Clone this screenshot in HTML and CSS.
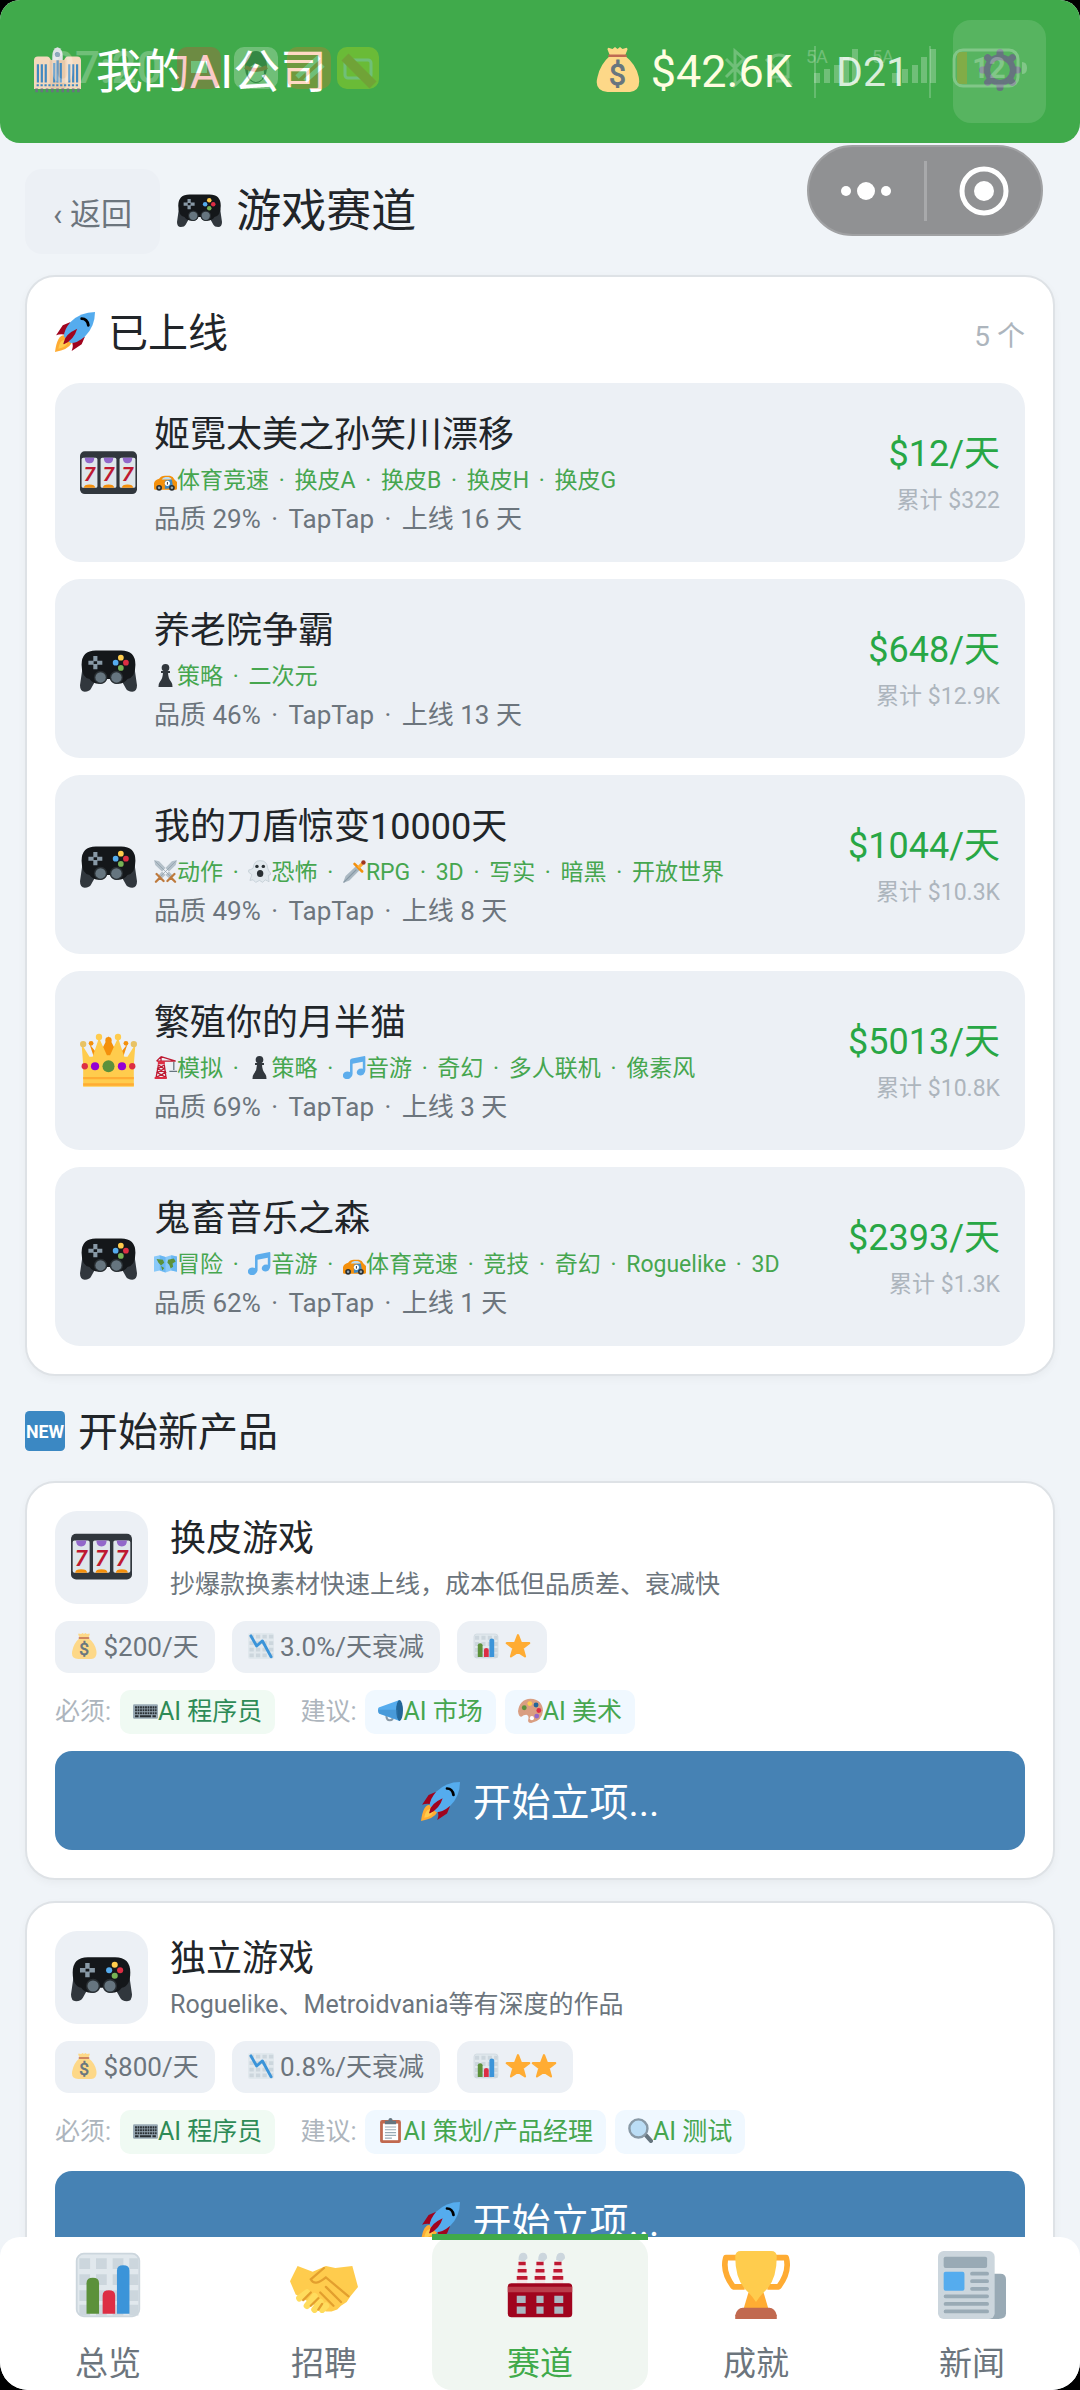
FILE: index.html
```html
<!DOCTYPE html>
<html lang="zh-CN">
<head>
  <meta charset="UTF-8">
  <meta name="viewport" content="width=device-width, initial-scale=1.0">
  <title>我的AI公司</title>
  <link rel="stylesheet" href="styles.css">
</head>
<body>

  <!-- icons -->
  <svg class="sprite" aria-hidden="true">
    <symbol id="i-office" viewBox="0 0 36 36">
      <path fill="#dfe3e6" d="M14 8q0-6 4-7q4 1 4 7v5h-8z"/>
      <path fill="#f4d9bd" d="M0 11q0-3 3-3h7q2 0 3 3h10q1-3 3-3h7q3 0 3 3v22H0z"/>
      <path fill="#e8c9aa" d="M12 11h12v22H12z"/>
      <path stroke="#4289c1" stroke-width="1.7" d="M3 14v14M6 14v14M9 14v14M27 14v14M30 14v14M33 14v14M15.500 13v15M18 11v17M20.500 13v15"/>
      <path stroke="#4289c1" stroke-width="1.5" stroke-dasharray="1.700 1.300" d="M2 30h33"/>
      <path stroke="#66757f" stroke-width="3" stroke-dasharray="2 2" d="M1 34h34"/>
      <circle cx="18" cy="6.500" r="2" fill="#6b8da6"/>
    </symbol>
    <symbol id="i-money" viewBox="0 0 36 36">
      <path fill="#fdd888" d="M12 7L10 2q0-2 2-1l2 .5L16 0l2 1.500L20 0l2 1.500 2-.5q2-1 2 1l-2 5q9 7 11 17 2 11-7 12H10Q-1 35 2 24 4 14 12 7z"/>
      <path fill="none" stroke="#bf6952" stroke-width="2" stroke-linecap="round" d="M11.500 7h13"/>
      <text x="18" y="30" text-anchor="middle" font-size="24" fill="#67757f" stroke="#67757f" stroke-width=".8">$</text>
    </symbol>
    <symbol id="i-gear" viewBox="0 0 36 36">
      <g fill="none" stroke="#66757f">
        <circle cx="18" cy="18" r="11" stroke-width="5"/>
        <path stroke-width="6" stroke-linecap="round" d="M18 3v3M18 30v3M3 18h3M30 18h3M7.400 7.400l2 2M26.600 26.600l2 2M7.400 28.600l2-2M26.600 9.400l2-2"/>
      </g>
    </symbol>
    <symbol id="i-gamepad" viewBox="0 0 36 36">
      <path fill="#31373d" d="M2 14L0 28q0 4 3 4 3 0 4-2l5-9h12l5 9q1 2 4 2 3 0 3-4l-2-14z"/>
      <path fill="#14171a" d="M10 6h16q9 0 9 9 0 8-5 9-2 3-6 3-4 0-5-3h-2q-1 3-5 3-4 0-6-3-5-1-5-9 0-9 9-9z"/>
      <circle cx="13" cy="23" r="4.200" fill="#292f33"/><circle cx="23" cy="23" r="4.200" fill="#292f33"/>
      <circle cx="13" cy="23" r="3.300" fill="#66757f"/><circle cx="23" cy="23" r="3.300" fill="#66757f"/>
      <path stroke="#8899a6" stroke-width="2.600" d="M9.700 9.500v3.300M9.700 14.500v3.300M5.300 13.700h3.300M10.800 13.700h3.300"/>
      <circle cx="25.800" cy="10.500" r="1.800" fill="#ffcc4d"/><circle cx="22.500" cy="13.700" r="1.800" fill="#55acee"/>
      <circle cx="29" cy="13.700" r="1.800" fill="#dd2e44"/><circle cx="25.800" cy="17" r="1.800" fill="#77b255"/>
    </symbol>
    <symbol id="i-slot" viewBox="0 0 36 36">
      <rect y="4" width="36" height="27" rx="3" fill="#31373d"/>
      <path fill="#dfe6eb" d="M1 9q0-1 1-1h8q1 0 1 1v17q0 1-1 1H2q-1 0-1-1zM13 9q0-1 1-1h8q1 0 1 1v17q0 1-1 1h-8q-1 0-1-1zM25 9q0-1 1-1h8q1 0 1 1v17q0 1-1 1h-8q-1 0-1-1z"/>
      <path fill="#9268ca" d="M3 8h6q0 3.500-3 3.500T3 8zM15 8h6q0 3.500-3 3.500T15 8zM27 8h6q0 3.500-3 3.500T27 8z"/>
      <path fill="#f4900c" d="M2.500 27q0-2 3.500-2t3.500 2zM14.500 27q0-2 3.500-2t3.500 2zM26.500 27q0-2 3.500-2t3.500 2z"/>
      <g font-size="13" font-weight="700" font-style="italic" fill="#be1931" text-anchor="middle">
        <text x="6" y="23">7</text><text x="18" y="23">7</text><text x="30" y="23">7</text>
      </g>
    </symbol>
    <symbol id="i-crown" viewBox="0 0 36 36">
      <path fill="#f4900c" d="M6 7l3 9h18l3-9-4 5-4-2-4-8-4 8-4 2z"/>
      <circle cx="7" cy="6.500" r="1.500" fill="#f4900c"/><circle cx="18" cy="4.500" r="2" fill="#f4900c"/><circle cx="29" cy="6.500" r="1.500" fill="#f4900c"/>
      <path fill="#ffcc4d" d="M2 34L2 20 1 7l5 8h2l4-12 5 11h2l5-11 4 12h2l5-8-1 13v14z"/>
      <circle cx="2" cy="7" r="2" fill="#e8c264"/><circle cx="12" cy="2.500" r="2" fill="#ffcc4d"/><circle cx="24" cy="2.500" r="2" fill="#ffcc4d"/><circle cx="34" cy="7" r="2" fill="#e8c264"/>
      <path stroke="#ffac33" stroke-width="1.500" d="M2 28.500h32M2 32.500h32"/>
      <circle cx="18" cy="21" r="3.800" fill="#5c913b"/>
      <circle cx="9.500" cy="21" r="2.600" fill="#9400d3"/><circle cx="26.500" cy="21" r="2.600" fill="#9400d3"/>
      <circle cx="3" cy="21" r="2" fill="#dd2e44"/><circle cx="33" cy="21" r="2" fill="#dd2e44"/>
    </symbol>
    <symbol id="i-rocket" viewBox="0 0 36 36">
      <path fill="#a0041e" d="M14 9L7 12 1 21q5-2 9 0zM27 22l-3 7-9 6q2-5 0-9z"/>
      <path fill="#ffac33" d="M8 21q-6 0-8 15 12-2 15-8z"/>
      <path fill="#ffcc4d" d="M8 25q-4 1-5 8 7-1 8-5z"/>
      <path fill="#55acee" d="M36 0Q23 0 14 9 8 16 8 22l6 6q6 0 13-6Q36 13 36 0z"/>
      <path fill="#a0041e" d="M8 27Q9 20 20 15q-3 10-12 14-1 0 0-2z"/>
      <path fill="none" stroke="#000" stroke-width="2.500" stroke-linecap="round" d="M24 6q5 0 6 6"/>
    </symbol>
    <symbol id="i-car" viewBox="0 0 36 36">
      <path fill="#f4900c" d="M8 17q3-5 9-5h8q5 1 7 6l4 4v10q0 2-2 2H2q-2 0-2-2v-8q1-5 8-7z"/>
      <path fill="#bbddf5" d="M12 18q2-4 6-4h5q4 1 5 4z"/>
      <path fill="#4289c1" d="M17 20l11-2 2 13-13 2z"/>
      <circle cx="8" cy="31" r="4.500" fill="#292f33"/><circle cx="28" cy="31" r="4.500" fill="#292f33"/>
      <circle cx="8" cy="31" r="2" fill="#99aab5"/><circle cx="28" cy="31" r="2" fill="#99aab5"/>
      <circle cx="21" cy="24" r="4" fill="#fff"/><path stroke="#292f33" stroke-width="1.500" d="M21 22v4"/>
    </symbol>
    <symbol id="i-pawn" viewBox="0 0 36 36">
      <circle cx="18" cy="6" r="6" fill="#31373d"/>
      <path fill="#31373d" d="M11 11h14v3h-3q0 8 5 14 2 2 2 8H7q0-6 2-8 5-6 5-14h-3z"/>
    </symbol>
    <symbol id="i-swords" viewBox="0 0 36 36">
      <path fill="#b4c0c9" d="M0 0l8 2 22 23-5 5L2 8zM36 0l-8 2L6 25l5 5L34 8z"/>
      <path stroke="#8899a6" d="M2 2l25 25M34 2L9 27"/>
      <path fill="none" stroke="#be7a3d" stroke-width="3.500" stroke-linecap="round" d="M4 22l11 11M32 22L21 33M9 28l-6 6M27 28l6 6"/>
    </symbol>
    <symbol id="i-ghost" viewBox="0 0 36 36">
      <path fill="#e1e8ed" stroke="#b8c4cd" d="M8 13Q9 1 19 1q11 0 12 12l2 5q4 2 2 5l-3 1 1 10-6-3-4 4-5-3-6 3-4-4-5 1 3-9-5-4q-1-5 3-4z"/>
      <circle cx="14" cy="10" r="2.700" fill="#292f33"/><circle cx="24" cy="10" r="2.700" fill="#292f33"/>
      <ellipse cx="19" cy="21" rx="5" ry="5.500" fill="#292f33"/>
    </symbol>
    <symbol id="i-dagger" viewBox="0 0 36 36">
      <path fill="#aab8c2" d="M0 36L4 25 21 9l6 6L10 32z"/>
      <path stroke="#8899a6" stroke-width="2" d="M1 35l20-20"/>
      <path stroke="#f4900c" stroke-width="4" stroke-linecap="round" d="M18 6l12 12"/>
      <path stroke="#ffac33" stroke-width="5" d="M24 12l6-6"/>
      <circle cx="32" cy="4" r="3.500" fill="#a0341e"/>
    </symbol>
    <symbol id="i-crane" viewBox="0 0 36 36">
      <path fill="none" stroke="#be1931" stroke-width="2" d="M4 8h30M11 1L4 8M11 1l23 7M11 1v7M7 13L3 35M16 13l3 22M7 14l9 6-11 6 13 7M16 14l-10 6 12 6-14 7"/>
      <path fill="#dd2e44" d="M6 8h11v5H6zM1 33h19v3H1z"/>
      <path stroke="#66757f" stroke-width="2" d="M31 9v13M24 24h12"/>
    </symbol>
    <symbol id="i-music" viewBox="0 0 36 36">
      <path fill="#5dadec" d="M34 0L14 4q-3 .5-3 3v18q-5-2-9 1-4 4-1 8 4 4 10 1 4-3 4-7V12l16-3v11q-5-1-8 2-3 4 0 7 4 3 9 0 3-3 3-7V2q0-2-1-2z"/>
    </symbol>
    <symbol id="i-map" viewBox="0 0 36 36">
      <path fill="#88c9f9" d="M0 7l9-2 9 3 9-3 9 2v24l-9-2-9 3-9-3-9 2z"/>
      <path fill="#55acee" d="M9 5l9 3v24l-9-3zM27 5l9 2v24l-9-2z" opacity=".6"/>
      <path fill="#5c913b" d="M4 11l10 1 2 5-5 4-4-4zM11 22l5 3-3 4zM22 12l9-2 3 5-5 3 1 5-4 3-2-6-3-3z"/>
    </symbol>
    <symbol id="i-new" viewBox="0 0 36 36">
      <rect width="36" height="36" rx="4" fill="#3b88c3"/>
      <text x="18" y="24" text-anchor="middle" font-size="16" font-weight="700" fill="#fff">NEW</text>
    </symbol>
    <symbol id="i-down" viewBox="0 0 36 36">
      <rect width="36" height="36" rx="3" fill="#e1e8ed"/>
      <path stroke="#ccd6dd" stroke-width="5" stroke-dasharray="6 3" d="M2 5h34M2 14h34M2 23h34M2 31h34"/>
      <path fill="none" stroke="#3b94d9" stroke-width="4" stroke-linecap="round" stroke-linejoin="round" d="M4 4l8 14 8-7 12 22"/>
    </symbol>
    <symbol id="i-chart" viewBox="-1 -1 38 38">
      <rect x=".5" y=".5" width="35" height="35" rx="4" fill="#e1e8ed" stroke="#ccd6dd"/>
      <path stroke="#ccd6dd" stroke-width="6" stroke-dasharray="6 3.300" d="M2 6h33M2 15h33M2 24h33M2 32h33"/>
      <path fill="#5c913b" d="M6 34V17q0-3 3.500-3t3.500 3v17z"/>
      <path fill="#dd2e44" d="M15 34V24q0-3 3.500-3t3.500 3v10z"/>
      <path fill="#3b94d9" d="M23 34V10q0-3 3.500-3t3.500 3v24z"/>
    </symbol>
    <symbol id="i-star" viewBox="0 0 36 36">
      <path fill="#ffac33" stroke="#ffac33" stroke-width="3" stroke-linejoin="round" d="M18 3l4 10.500 11.500.5-9 7 3.200 11.500L18 26l-9.700 6.500L11.500 21l-9-7 11.500-.5z"/>
    </symbol>
    <symbol id="i-keyboard" viewBox="0 0 36 36">
      <rect y="9" width="36" height="21" rx="2" fill="#99aab5"/>
      <path stroke="#292f33" stroke-width="3" stroke-dasharray="2.600 1" d="M3 13.500h31M3 17.700h31M3 22h31"/>
      <path stroke="#292f33" stroke-width="3" d="M3 26.300h5M10 26.300h16M28 26.300h5"/>
    </symbol>
    <symbol id="i-horn" viewBox="0 0 36 36">
      <path fill="none" stroke="#8899a6" stroke-width="3" d="M12 24q0 8 5 8t5-6"/>
      <path fill="#55acee" d="M0 17Q0 13 3 13L31 3v30L3 23q-3 0-3-6z"/>
      <ellipse cx="31" cy="18" rx="5" ry="15" fill="#226699"/>
      <path fill="#3b88c3" d="M0 17h28v14L3 23q-3-1-3-6z" opacity=".5"/>
    </symbol>
    <symbol id="i-palette" viewBox="0 0 36 36">
      <path fill="#d99e82" d="M18 1q17 1 18 17-1 15-17 18-6 0-4-6 1-5-3-6-4 0-7 3-4 0-5-8Q2 2 18 1z"/>
      <circle cx="9" cy="14" r="3.500" fill="#5c913b"/><circle cx="17" cy="8" r="3.500" fill="#ffcc4d"/>
      <circle cx="26" cy="10" r="3.500" fill="#226699"/><circle cx="30" cy="18" r="3.500" fill="#dd2e44"/>
      <circle cx="27" cy="26" r="3.500" fill="#9268ca"/><circle cx="20" cy="29" r="3" fill="#fff"/>
    </symbol>
    <symbol id="i-clipboard" viewBox="0 0 36 36">
      <rect x="3" y="3" width="30" height="33" rx="3" fill="#c1694f"/>
      <path fill="#fff" d="M7 8h22v24H7z"/>
      <path fill="#66757f" d="M10 4h5q0-4 3-4t3 4h5v5H10z"/>
      <path stroke="#99aab5" stroke-width="1.600" d="M10 13h16M10 17h16M10 21h16M10 25h16M10 29h10"/>
    </symbol>
    <symbol id="i-search" viewBox="0 0 36 36">
      <path stroke="#66757f" stroke-width="6" stroke-linecap="round" d="M26 25l7 8"/>
      <circle cx="15" cy="15" r="13" fill="#bbddf5" stroke="#8899a6" stroke-width="3.500"/>
    </symbol>
    <symbol id="i-hands" viewBox="0 0 36 36">
      <path fill="#ffcc4d" d="M4 8l8 3 7-3 5 1 9-1 3 11-4 5-2 3-3 2-2 2-3 1-3 0-9-5-7-4-3-7z"/>
      <path fill="none" stroke="#ffdc5d" stroke-width="3.500" stroke-linecap="round" d="M9 22l-4 3M13 24l-4 5M16 27l-3 4M19 29l-2 2"/>
      <path fill="none" stroke="#e39f2e" stroke-width="1.200" stroke-linecap="round" d="M18 9l-7 6q2 4 8-1l12 10M19 19l8 8M16 22l7 7M7 26l4-4M11 29l4-4M15 31l2-3"/>
    </symbol>
    <symbol id="i-factory" viewBox="-1 0 38 36">
      <path fill="#ccd6dd" d="M6 4q0-4 2.500-4T11 3l-2 2zM17 4q0-4 2.500-4T22 3l-2 2zM27 4q0-4 2.500-4T32 3l-2 2z"/>
      <path fill="#f5e4e6" d="M6 5h4l1 13H5zM16 5h4l1 13h-6zM26 5h4l1 13h-6z"/>
      <path stroke="#be1931" stroke-width="2" d="M6 6h4M5.500 10h5M5 14h6M16 6h4M15.500 10h5M15 14h6M26 6h4M25.500 10h5M25 14h6"/>
      <rect y="17" width="36" height="19" rx="2" fill="#a0041e"/>
      <path fill="#bb3c4b" d="M0 19h36v3H0z"/>
      <path fill="#aab8c2" d="M5 24h5v4H5zM16 24h4v4h-4zM26 24h5v4h-5zM5 30h5v4H5zM16 30h4v4h-4zM26 30h5v4h-5z"/>
    </symbol>
    <symbol id="i-cup" viewBox="0 0 36 36">
      <path fill="none" stroke="#ffac33" stroke-width="3" stroke-linejoin="round" d="M9 3.500H2Q0 11 6 19h6M27 3.500h7q2 7.500-4 15.500h-6"/>
      <path fill="#ffac33" d="M14 22h8l3 10H11z"/>
      <path fill="#ffcc4d" d="M7 3q0-3 3-3h16q3 0 3 3 0 13-7 19-2 2-4 5-2-3-4-5Q7 16 7 3z"/>
      <path fill="#c1694f" d="M7 36v-2q1-4 4-4h14q3 0 4 4v2z"/>
    </symbol>
    <symbol id="i-news" viewBox="0 0 36 36">
      <path fill="#99aab5" d="M24 12h9q3 0 3 3v18q0 3-4 3h-8z"/>
      <rect width="30" height="36" rx="3" fill="#ccd6dd"/>
      <rect x="3" y="3" width="23" height="6" rx="1" fill="#99aab5"/>
      <rect x="3" y="11" width="11" height="10" rx="1" fill="#55acee"/>
      <path stroke="#99aab5" stroke-width="2" stroke-linecap="round" d="M18 12h8M18 16h8M18 20h8M4 24h22M4 28h22M4 32h22"/>
    </symbol>
  </svg>

  <div class="app">

    <header class="topbar">
      <h1 class="company"><svg class="emoji"><use href="#i-office"/></svg> 我的AI公司</h1>
      <div class="cash"><svg class="emoji"><use href="#i-money"/></svg> $42.6K</div>
      <div class="day">D21</div>
      <button class="settings" aria-label="设置"><svg class="emoji"><use href="#i-gear"/></svg></button>

      <!-- faint system status bar on top of the header -->
      <div class="status" aria-hidden="true">
        <span class="clock">07:20</span>
        <svg class="notices" viewBox="0 0 204 42">
          <rect width="44" height="42" rx="10" fill="#f2302c"/>
          <path fill="#fff" d="M14 14h16v12H14z"/>
          <rect x="57" width="44" height="42" rx="10" fill="#fff"/>
          <ellipse cx="79" cy="20" rx="11" ry="16" fill="#123"/>
          <ellipse cx="79" cy="26" rx="8" ry="9" fill="#fff"/>
          <path stroke="#e02020" stroke-width="4" d="M68 20q11 6 22 0" fill="none"/>
          <rect x="110" width="44" height="42" rx="10" fill="#ff6a1a"/>
          <path stroke="#fff" stroke-width="5" d="M120 30l22-20M128 34l18-16"/>
          <rect x="160" width="42" height="42" rx="10" fill="#e6f000"/>
          <rect x="168" y="13" width="26" height="18" rx="3" fill="none" stroke="#fff" stroke-width="3"/>
          <path stroke="#ff9000" stroke-width="10" d="M168 10l28 28"/>
        </svg>
        <svg class="radio" viewBox="0 0 218 42" fill="#fff">
          <path fill="none" stroke="#fff" stroke-width="3" d="M2 12l18 18-9 8V4l9 8L2 30M42 12l26 26M46 30V18q0-10 9-10t9 10v12zM52 34h7"/>
          <text x="82" y="16" font-size="18">5A</text>
          <path d="M90 26h6v10h-6zM100 22h6v14h-6zM110 18h6v18h-6zM119 10h6v26h-6zM128 2h6v34h-6z"/>
          <text x="148" y="16" font-size="18">5A</text>
          <path d="M168 26h6v10h-6zM178 22h6v14h-6zM188 18h6v18h-6zM197 10h6v26h-6zM206 2h6v34h-6z"/>
        </svg>
        <svg class="battery" viewBox="0 0 76 40">
          <rect x="2" y="2" width="64" height="36" rx="9" fill="none" stroke="#fff" stroke-width="3"/>
          <path fill="#ff9500" d="M5 8q0-4 4-4h6v32H9q-4 0-4-4z"/>
          <path fill="#fff" d="M70 14q5 0 5 6t-5 6z"/>
          <text x="37" y="30" text-anchor="middle" font-size="29" font-weight="700" fill="#fff">12</text>
        </svg>
      </div>
    </header>

    <div class="capsule">
      <button aria-label="更多">
        <svg viewBox="0 0 50 18"><circle cx="5" cy="9" r="5"/><circle cx="25" cy="9" r="9"/><circle cx="45" cy="9" r="5"/></svg>
      </button>
      <button aria-label="关闭">
        <svg viewBox="0 0 50 50"><circle cx="25" cy="25" r="22" fill="none" stroke="#fff" stroke-width="5"/><circle cx="25" cy="25" r="10"/></svg>
      </button>
    </div>

    <main>
      <div class="page-head">
        <button class="back">‹ 返回</button>
        <h2><svg class="emoji"><use href="#i-gamepad"/></svg> 游戏赛道</h2>
      </div>

      <section class="card">
        <div class="card-head">
          <h3><svg class="emoji"><use href="#i-rocket"/></svg> 已上线</h3>
          <span class="count">5 个</span>
        </div>

        <div class="product">
          <svg class="emoji"><use href="#i-slot"/></svg>
          <div class="info">
            <h4>姬霓太美之孙笑川漂移</h4>
            <p class="tags"><svg class="emoji"><use href="#i-car"/></svg>体育竞速 <i>·</i> 换皮A <i>·</i> 换皮B <i>·</i> 换皮H <i>·</i> 换皮G</p>
            <p class="meta">品质 29% <i>·</i> TapTap <i>·</i> 上线 16 天</p>
          </div>
          <div class="income">
            <strong>$12/天</strong>
            <span>累计 $322</span>
          </div>
        </div>

        <div class="product">
          <svg class="emoji"><use href="#i-gamepad"/></svg>
          <div class="info">
            <h4>养老院争霸</h4>
            <p class="tags"><svg class="emoji"><use href="#i-pawn"/></svg>策略 <i>·</i> 二次元</p>
            <p class="meta">品质 46% <i>·</i> TapTap <i>·</i> 上线 13 天</p>
          </div>
          <div class="income">
            <strong>$648/天</strong>
            <span>累计 $12.9K</span>
          </div>
        </div>

        <div class="product">
          <svg class="emoji"><use href="#i-gamepad"/></svg>
          <div class="info">
            <h4>我的刀盾惊变10000天</h4>
            <p class="tags"><svg class="emoji"><use href="#i-swords"/></svg>动作 <i>·</i> <svg class="emoji"><use href="#i-ghost"/></svg>恐怖 <i>·</i> <svg class="emoji"><use href="#i-dagger"/></svg>RPG <i>·</i> 3D <i>·</i> 写实 <i>·</i> 暗黑 <i>·</i> 开放世界</p>
            <p class="meta">品质 49% <i>·</i> TapTap <i>·</i> 上线 8 天</p>
          </div>
          <div class="income">
            <strong>$1044/天</strong>
            <span>累计 $10.3K</span>
          </div>
        </div>

        <div class="product">
          <svg class="emoji"><use href="#i-crown"/></svg>
          <div class="info">
            <h4>繁殖你的月半猫</h4>
            <p class="tags"><svg class="emoji"><use href="#i-crane"/></svg>模拟 <i>·</i> <svg class="emoji"><use href="#i-pawn"/></svg>策略 <i>·</i> <svg class="emoji"><use href="#i-music"/></svg>音游 <i>·</i> 奇幻 <i>·</i> 多人联机 <i>·</i> 像素风</p>
            <p class="meta">品质 69% <i>·</i> TapTap <i>·</i> 上线 3 天</p>
          </div>
          <div class="income">
            <strong>$5013/天</strong>
            <span>累计 $10.8K</span>
          </div>
        </div>

        <div class="product">
          <svg class="emoji"><use href="#i-gamepad"/></svg>
          <div class="info">
            <h4>鬼畜音乐之森</h4>
            <p class="tags"><svg class="emoji"><use href="#i-map"/></svg>冒险 <i>·</i> <svg class="emoji"><use href="#i-music"/></svg>音游 <i>·</i> <svg class="emoji"><use href="#i-car"/></svg>体育竞速 <i>·</i> 竞技 <i>·</i> 奇幻 <i>·</i> Roguelike <i>·</i> 3D</p>
            <p class="meta">品质 62% <i>·</i> TapTap <i>·</i> 上线 1 天</p>
          </div>
          <div class="income">
            <strong>$2393/天</strong>
            <span>累计 $1.3K</span>
          </div>
        </div>
      </section>

      <h3 class="section-title"><svg class="emoji"><use href="#i-new"/></svg> 开始新产品</h3>

      <section class="card">
        <div class="type-head">
          <div class="tile"><svg class="emoji"><use href="#i-slot"/></svg></div>
          <div>
            <h4>换皮游戏</h4>
            <p class="desc">抄爆款换素材快速上线，成本低但品质差、衰减快</p>
          </div>
        </div>
        <div class="chips">
          <span><svg class="emoji"><use href="#i-money"/></svg> $200/天</span>
          <span><svg class="emoji"><use href="#i-down"/></svg> 3.0%/天衰减</span>
          <span><svg class="emoji"><use href="#i-chart"/></svg> <svg class="emoji"><use href="#i-star"/></svg></span>
        </div>
        <div class="roles">
          <div>必须: <span class="must"><svg class="emoji"><use href="#i-keyboard"/></svg>AI 程序员</span></div>
          <div>建议: <span><svg class="emoji"><use href="#i-horn"/></svg>AI 市场</span><span><svg class="emoji"><use href="#i-palette"/></svg>AI 美术</span></div>
        </div>
        <button class="start"><svg class="emoji"><use href="#i-rocket"/></svg> 开始立项...</button>
      </section>

      <section class="card">
        <div class="type-head">
          <div class="tile"><svg class="emoji"><use href="#i-gamepad"/></svg></div>
          <div>
            <h4>独立游戏</h4>
            <p class="desc">Roguelike、Metroidvania等有深度的作品</p>
          </div>
        </div>
        <div class="chips">
          <span><svg class="emoji"><use href="#i-money"/></svg> $800/天</span>
          <span><svg class="emoji"><use href="#i-down"/></svg> 0.8%/天衰减</span>
          <span><svg class="emoji"><use href="#i-chart"/></svg> <svg class="emoji"><use href="#i-star"/></svg><svg class="emoji"><use href="#i-star"/></svg></span>
        </div>
        <div class="roles">
          <div>必须: <span class="must"><svg class="emoji"><use href="#i-keyboard"/></svg>AI 程序员</span></div>
          <div>建议: <span><svg class="emoji"><use href="#i-clipboard"/></svg>AI 策划/产品经理</span><span><svg class="emoji"><use href="#i-search"/></svg>AI 测试</span></div>
        </div>
        <button class="start"><svg class="emoji"><use href="#i-rocket"/></svg> 开始立项...</button>
      </section>
    </main>

    <nav class="tabbar">
      <a href="#overview"><svg class="emoji"><use href="#i-chart"/></svg>总览</a>
      <a href="#hire"><svg class="emoji"><use href="#i-hands"/></svg>招聘</a>
      <a href="#tracks" class="active"><svg class="emoji"><use href="#i-factory"/></svg>赛道</a>
      <a href="#awards"><svg class="emoji"><use href="#i-cup"/></svg>成就</a>
      <a href="#news"><svg class="emoji"><use href="#i-news"/></svg>新闻</a>
    </nav>

  </div>
</body>
</html>
```
FILE: styles.css
```css
* {
  box-sizing: border-box;
  margin: 0;
  padding: 0;
}
body {
  background: #000;
  color: #212529;
  font-family: Roboto, "Noto Sans CJK SC", sans-serif;
}
h1, h2, h3, h4, strong {
  font-weight: 400;
}
i {
  font-style: normal;
  padding: 0 4px;
}
button {
  border: none;
  font: inherit;
  cursor: pointer;
}
.sprite {
  display: none;
}
.emoji {
  display: inline-block;
  flex: none;
  width: 1em;
  height: 1em;
  vertical-align: -0.12em;
}
h1 .emoji,
h2 .emoji,
h3 .emoji,
.start .emoji {
  margin-right: 3px;
}
.app {
  position: relative;
  display: flex;
  flex-direction: column;
  height: 100vh;
  background: #f0f4f8;
  border-radius: 20px 20px 28px 28px;
  overflow: hidden;
}

/* header */
.topbar {
  position: relative;
  display: flex;
  align-items: center;
  padding: 20px 34px;
  background: #40aa4b;
  border-radius: 0 0 20px 20px;
  color: #fff;
}
.company {
  flex: 1;
  font-size: 47px;
  line-height: 60px;
}
.cash {
  margin-right: 22px;
  font-size: 45px;
  line-height: 60px;
  color: #fffde0;
}
.day {
  margin-right: 22px;
  padding: 0 20px;
  border: solid rgba(255,255,255,0.2);
  border-width: 0 2px;
  font-size: 41px;
  line-height: 52px;
  color: #d9eedb;
}
.settings {
  width: 93px;
  height: 103px;
  border-radius: 18px;
  background: rgba(255,255,255,0.12);
  font-size: 42px;
}
.status {
  position: absolute;
  top: 46px;
  left: 50px;
  right: 52px;
  display: flex;
  align-items: center;
  height: 44px;
  opacity: 0.25;
  pointer-events: none;
}
.clock {
  flex: none;
  width: 127px;
  font-size: 44px;
  font-weight: 500;
}
.notices {
  width: 204px;
  height: 42px;
}
.radio {
  width: 218px;
  height: 42px;
  margin-left: auto;
  margin-right: 10px;
}
.battery {
  width: 76px;
  height: 40px;
}
.capsule {
  position: absolute;
  top: 145px;
  right: 37px;
  display: flex;
  align-items: center;
  width: 236px;
  height: 91px;
  border: 2px solid #a0a1a3;
  border-radius: 46px;
  background: #909193;
}
.capsule button {
  flex: 1;
  height: 60px;
  background: none;
}
.capsule button + button {
  border-left: 3px solid #a8a9ab;
}
.capsule svg {
  display: block;
  width: 50px;
  max-height: 50px;
  margin: auto;
  fill: #fff;
}

/* content */
main {
  flex: 1;
  min-height: 0;
  padding: 26px 25px 0;
  overflow: hidden;
}
.page-head {
  display: flex;
  align-items: center;
  gap: 17px;
  margin-bottom: 21px;
}
.page-head h2 {
  font-size: 45px;
  line-height: 60px;
}
.back {
  height: 85px;
  padding: 0 28px;
  border-radius: 17px;
  background: #ecf0f5;
  color: #6c757d;
  font-size: 31px;
}
.card {
  margin-bottom: 21px;
  padding: 28px;
  border: 2px solid #dee2e6;
  border-radius: 30px;
  background: #fff;
  box-shadow: 0 3px 8px rgba(0,0,0,0.04);
}
.card-head {
  display: flex;
  justify-content: space-between;
  align-items: center;
  margin-bottom: 21px;
}
.card-head h3,
.section-title {
  font-size: 40px;
  line-height: 57px;
}
.section-title {
  margin: 28px 0 20px;
}
.count {
  color: #adb5bd;
  font-size: 28px;
}
.product {
  display: flex;
  align-items: center;
  gap: 17px;
  padding: 25px 25px 24px;
  border-radius: 25px;
  background: #ecf0f5;
}
.product + .product {
  margin-top: 17px;
}
.product > .emoji {
  font-size: 57px;
}
.info {
  flex: 1;
}
h4 {
  font-size: 36px;
  line-height: 54px;
}
.tags {
  color: #46a64f;
  font-size: 23px;
  line-height: 38px;
}
.meta {
  color: #6c757d;
  font-size: 26px;
  line-height: 38px;
}
.income {
  text-align: right;
}
.income strong {
  display: block;
  color: #28a745;
  font-size: 36px;
  line-height: 56px;
}
.income span {
  display: block;
  color: #adb5bd;
  font-size: 23px;
  line-height: 38px;
}

/* new products */
.type-head {
  display: flex;
  align-items: center;
  gap: 22px;
}
.tile {
  display: flex;
  align-items: center;
  justify-content: center;
  width: 93px;
  height: 93px;
  border-radius: 22px;
  background: #ecf0f5;
  font-size: 61px;
}
.desc {
  color: #6c757d;
  font-size: 25px;
  line-height: 38px;
}
.chips {
  display: flex;
  gap: 17px;
  margin: 17px 0;
}
.chips span {
  padding: 0 16px;
  border-radius: 14px;
  background: #ecf0f5;
  color: #6c757d;
  font-size: 26px;
  line-height: 52px;
}
.roles {
  display: flex;
  gap: 25px;
  margin-bottom: 17px;
  color: #adb5bd;
  font-size: 25px;
  line-height: 44px;
}
.roles div {
  display: flex;
  gap: 9px;
}
.roles span {
  padding: 0 13px;
  border-radius: 10px;
  background: #f0f8ff;
  color: #46a64f;
}
.roles .must {
  background: #f0faf3;
  color: #2e8b57;
}
.start {
  display: block;
  width: 100%;
  height: 99px;
  padding-bottom: 3px;
  border-radius: 17px;
  background: #4682b4;
  color: #fff;
  font-size: 39px;
}

/* bottom tabs */
.tabbar {
  position: relative;
  display: flex;
  height: 153px;
  background: #fff;
  border-radius: 20px 20px 0 0;
}
.tabbar a {
  position: relative;
  flex: 1;
  display: flex;
  flex-direction: column;
  align-items: center;
  padding-top: 14px;
  color: #6c757d;
  font-size: 33px;
  line-height: 50px;
  text-decoration: none;
}
.tabbar .emoji {
  margin-bottom: 20px;
  font-size: 68px;
}
.tabbar .active {
  border-radius: 20px;
  background: #f0f6f1;
  color: #40aa4b;
}
.tabbar .active::before {
  content: "";
  position: absolute;
  top: -3px;
  left: 0;
  right: 0;
  height: 6px;
  background: #40aa4b;
}
```
